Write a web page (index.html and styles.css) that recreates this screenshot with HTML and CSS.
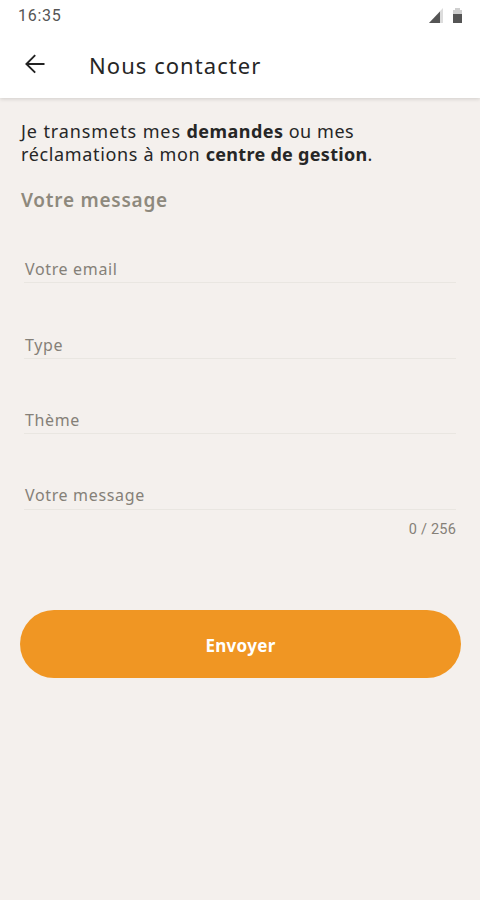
FILE: index.html
```html
<!DOCTYPE html>
<html lang="fr">
<head>
<meta charset="utf-8">
<title>Nous contacter</title>
<link rel="stylesheet" href="styles.css">
</head>
<body>
<header class="header">
  <div class="status">
    <span class="clock">16:35</span>
    <svg class="status-icons" width="36" height="18" viewBox="0 0 36 18">
      <path d="M15 1V16H1Z" fill="#dcdcdc"/>
      <path d="M12 4.5V16H1Z" fill="#555"/>
      <path d="M27 1h5v2h2v6H25V3h2z" fill="#cfcfcf"/>
      <path d="M25 7h9v9h-9z" fill="#555"/>
    </svg>
  </div>
  <div class="toolbar">
    <svg class="back" width="20" height="20" viewBox="0 0 20 20">
      <path d="M19.5 10H1.5M10.2 1.2L1.4 10L10.2 18.6" fill="none" stroke="#222" stroke-width="1.9"/>
    </svg>
    <h1 class="title">Nous contacter</h1>
  </div>
</header>
<main class="content">
  <p class="intro"><span class="wide">Je transmets mes </span><b class="key">demandes</b><span class="tail"> ou mes</span><br><span class="wide second">réclamations à mon </span><b class="key second">centre de gestion</b>.</p>
  <h2 class="subtitle">Votre message</h2>
  <form class="form">
    <div class="field">Votre email</div>
    <div class="field">Type</div>
    <div class="field">Thème</div>
    <div class="field">Votre message</div>
    <div class="counter">0 / 256</div>
    <button class="send" type="button">Envoyer</button>
  </form>
</main>
</body>
</html>
```
FILE: styles.css
```css
* { box-sizing: border-box; }
body {
  margin: 0;
  min-height: 900px;
  background: #f4f0ed;
  color: #262626;
  font-family: "Noto Sans", sans-serif;
}
h1, h2, p { margin: 0; }
.header {
  height: 98px;
  background: #fff;
  box-shadow: 0 1px 4px rgba(0, 0, 0, 0.15);
}
.status {
  display: flex;
  justify-content: space-between;
  align-items: center;
  height: 32px;
  padding: 0 16px 0 18px;
}
.clock {
  font: 400 16px/20px Roboto, sans-serif;
  letter-spacing: 0.7px;
  color: #555;
}
.toolbar {
  display: flex;
  align-items: center;
  height: 66px;
  padding: 0 25px;
  gap: 44px;
}
.back { margin-top: -2px; }
.title {
  font-size: 22px;
  font-weight: 400;
  line-height: 30px;
  letter-spacing: 1.05px;
}
.content { padding: 22px 19px 0 21px; }
.intro {
  font-size: 18px;
  line-height: 23px;
  white-space: nowrap;
}
.wide { letter-spacing: 0.9px; }
.wide.second { letter-spacing: 0.65px; }
.key { letter-spacing: 0.45px; }
.key.second { letter-spacing: 0.3px; }
.tail { letter-spacing: 0.55px; }
.subtitle {
  margin-top: 21px;
  font-size: 19px;
  line-height: 26px;
  font-weight: 600;
  letter-spacing: 0.75px;
  color: #8e897d;
}
.form {
  display: flex;
  flex-direction: column;
  margin-left: -1px;
}
.field {
  display: flex;
  align-items: flex-end;
  height: 75.5px;
  margin: 0 5px 0 4px;
  padding: 0 1px 2px;
  border-bottom: 1px solid #e9e6e1;
  font-size: 16px;
  line-height: 22px;
  letter-spacing: 0.65px;
  color: #858078;
}
.field:first-child { height: 70px; }
.field:nth-child(4) { padding-bottom: 3px; }
.counter {
  margin: 10px 5px 0 0;
  align-self: flex-end;
  font: 14.5px/20px Roboto, sans-serif;
  letter-spacing: 0.2px;
  color: #858078;
}
.send {
  height: 68px;
  margin-top: 70.2px;
  border: 0;
  border-radius: 34px;
  background: #f09623;
  color: #fff;
  font: 700 17px/24px "Noto Sans", sans-serif;
  letter-spacing: 0.3px;
  padding: 4px 0 0;
}
```
